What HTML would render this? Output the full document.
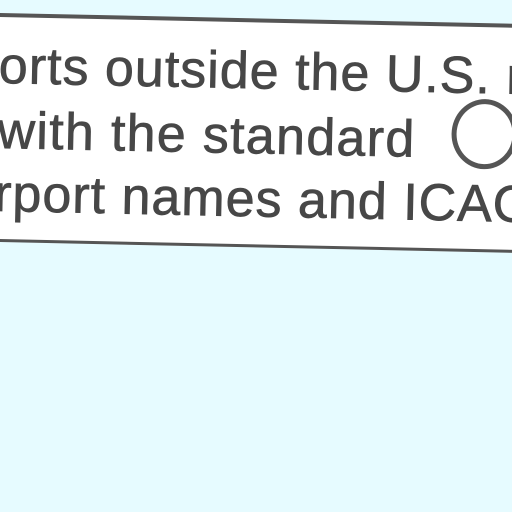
<!DOCTYPE html>
<html><head><meta charset="utf-8"><style>
html,body{margin:0;padding:0;width:512px;height:512px;overflow:hidden;background:#e6fbff;}
.box{position:absolute;left:-20px;top:13px;width:580px;height:222px;background:#fff;border-top:4px solid #555;border-bottom:3px solid #555;transform:rotate(1.2deg);transform-origin:20px 0;}
.t{position:absolute;font-family:"Liberation Sans",sans-serif;font-size:52px;color:#474747;white-space:nowrap;line-height:1;-webkit-text-stroke:0.7px #474747;}
.c{position:absolute;width:56px;height:60px;border:5px solid #555;border-radius:50%;}
</style></head><body>
<div class="box">
<div class="t" style="left:20px;top:23px;letter-spacing:1px">orts outside the U.S. r</div>
<div class="t" style="left:20px;top:88px;letter-spacing:1.3px">with the standard</div>
<div class="t" style="left:18px;top:151px;letter-spacing:1px">rport names and ICAO</div>
<div class="c" style="left:474px;top:72px"></div>
</div>
</body></html>
